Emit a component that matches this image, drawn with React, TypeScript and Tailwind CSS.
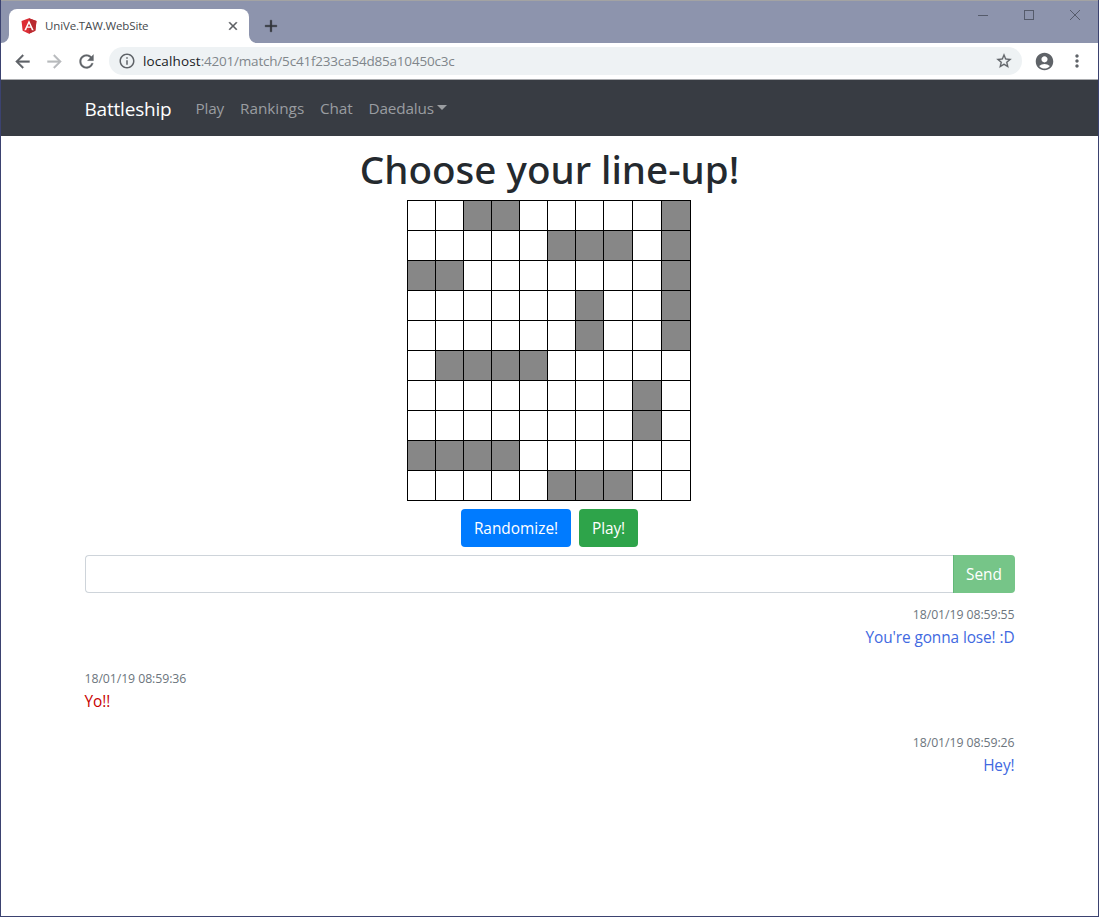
import { MdAccountCircle, MdInfoOutline, MdMoreVert } from "react-icons/md";

const FLEET = [
  "..##.....#",
  ".....###.#",
  "##.......#",
  "......#..#",
  "......#..#",
  ".####.....",
  "........#.",
  "........#.",
  "####......",
  ".....###..",
];

const MESSAGES = [
  { date: "18/01/19 08:59:55", text: "You're gonna lose! :D", own: true },
  { date: "18/01/19 08:59:36", text: "Yo!!", own: false },
  { date: "18/01/19 08:59:26", text: "Hey!", own: true },
];

const GLYPHS = {
  back: "M20 11H7.83l5.59-5.59L12 4l-8 8 8 8 1.41-1.41L7.83 13H20v-2z",
  forward: "m12 4-1.41 1.41L16.17 11H4v2h12.17l-5.58 5.59L12 20l8-8z",
  reload:
    "M17.65 6.35C16.2 4.9 14.21 4 12 4c-4.42 0-7.99 3.58-7.99 8s3.57 8 7.99 8c3.73 0 6.84-2.55 7.73-6h-2.08c-.82 2.33-3.04 4-5.65 4-3.31 0-6-2.69-6-6s2.69-6 6-6c1.66 0 3.14.69 4.22 1.78L13 11h7V4l-2.35 2.35z",
  close:
    "M19 6.41 17.59 5 12 10.59 6.41 5 5 6.41 10.59 12 5 17.59 6.41 19 12 13.41 17.59 19 19 17.59 13.41 12z",
  add: "M19 13h-6v6h-2v-6H5v-2h6V5h2v6h6v2z",
  star: "m22 9.24-7.19-.62L12 2 9.19 8.63 2 9.24l5.46 4.73L5.82 21 12 17.27 18.18 21l-1.63-7.03L22 9.24zM12 15.4l-3.76 2.27 1-4.28-3.32-2.88 4.38-.38L12 6.1l1.71 4.04 4.38.38-3.32 2.88 1 4.28L12 15.4z",
};

function Glyph({
  name,
  size,
  weight = 0.4,
  className = "",
}: {
  name: keyof typeof GLYPHS;
  size: number;
  weight?: number;
  className?: string;
}) {
  return (
    <svg
      width={size}
      height={size}
      viewBox="0 0 24 24"
      fill="currentColor"
      stroke="currentColor"
      strokeWidth={weight}
      className={`shrink-0 ${className}`}
    >
      <path d={GLYPHS[name]} />
    </svg>
  );
}

function AngularLogo() {
  return (
    <svg width="16" height="16" viewBox="0 0 250 250" className="shrink-0">
      <path fill="#dd2c34" d="M125 5 8 46l18 152 99 50 99-50 18-152z" />
      <path fill="#b92a30" d="M125 5v243l99-50 18-152z" />
      <path
        fill="#fff"
        d="M125 36 52 190h28l15-37h60l15 37h28zm0 52 22 43h-44z"
      />
    </svg>
  );
}

function TitleBar() {
  return (
    <div className="flex h-[43px] border-t border-[#a3a3a3] bg-[#8d94ad]">
      <svg width="8" height="8" className="self-end shrink-0">
        <path d="M0 8h8V0a8 8 0 0 1-8 8z" fill="#fff" />
      </svg>
      <div className="mt-2 flex h-[34px] w-60 shrink-0 items-center rounded-t-lg bg-white pl-3 pr-[9px]">
        <AngularLogo />
        <span className="ml-2 flex-1 text-[11.5px] tracking-[-0.14px] text-[#45494d]">
          UniVe.TAW.WebSite
        </span>
        <Glyph name="close" size={14} weight={0.8} className="text-[#5a5d61]" />
      </div>
      <svg width="8" height="8" className="self-end shrink-0">
        <path d="M0 0v8h8a8 8 0 0 1-8-8z" fill="#fff" />
      </svg>
      <Glyph name="add" size={20} className="ml-1 mt-[15px] text-[#303338]" />
      <svg
        width="104"
        height="12"
        className="ml-auto mr-[17px] mt-2"
        fill="none"
        stroke="#555b6b"
        shapeRendering="crispEdges"
      >
        <path d="M1 6.5h10M47.5 1.5h9v9h-9z" />
        <path d="m93 1 10 10m0-10L93 11" shapeRendering="auto" />
      </svg>
    </div>
  );
}

function Toolbar() {
  return (
    <div className="flex h-[37px] items-center border-b border-[#a9abae] bg-white pl-[11px] text-[#5f6368]">
      <Glyph name="back" size={21} />
      <Glyph name="forward" size={21} className="ml-[11px] text-[#b8babd]" />
      <Glyph name="reload" size={21} weight={0.3} className="ml-[11px]" />
      <div className="ml-3 flex h-7 w-[913px] items-center rounded-full bg-[#eef2f4] pl-[9px] pr-[9px]">
        <MdInfoOutline size={18} />
        <span className="ml-[7px] flex-1 text-[13.5px] tracking-[-0.2px] text-[#80868b]">
          <span className="tracking-[0.12px] text-[#202124]">localhost</span>
          :4201/match/5c41f233ca54d85a10450c3c
        </span>
        <Glyph name="star" size={18} weight={0.3} />
      </div>
      <MdAccountCircle size={21} className="ml-[11.5px]" />
      <MdMoreVert size={20} className="ml-3" />
    </div>
  );
}

function Navbar() {
  return (
    <nav className="flex h-14 items-center bg-[#383c43] pl-[83.5px] text-[15.3px] text-[#9a9da1]">
      <a className="w-[111px] pt-0.5 text-[19px] tracking-[-0.2px] text-white">
        Battleship
      </a>
      <a className="w-[44.5px] tracking-[-0.2px]">Play</a>
      <a className="w-[80px]">Rankings</a>
      <a className="w-[48.5px] tracking-[-0.1px]">Chat</a>
      <a className="flex items-center tracking-[-0.15px]">
        Daedalus
        <span className="ml-[3px] mt-[-2px] border-x-[5px] border-t-[5px] border-x-transparent border-t-[#9a9da1]" />
      </a>
    </nav>
  );
}

function Board() {
  return (
    <div className="ml-[322.5px] grid w-[284px] grid-cols-[repeat(7,28px)_repeat(3,29px)] border-l border-t border-black">
      {FLEET.flatMap((row, y) =>
        row.split("").map((cell, x) => (
          <div
            key={`${y}-${x}`}
            className={`h-[30px] border-b border-r border-black ${
              cell === "#" ? "bg-[#878787]" : "bg-white"
            }`}
          />
        )),
      )}
    </div>
  );
}

function Chat() {
  return (
    <section className="mt-2">
      <div className="flex h-[38px]">
        <input className="min-w-0 flex-1 rounded-l border border-r-0 border-[#ced4da] bg-white px-3 outline-none" />
        <button className="w-[62px] rounded-r border-l border-[#62b878] bg-[#76c588] pt-0.5 text-[15.4px] text-white">
          Send
        </button>
      </div>
      <div className="mt-2.5">
        {MESSAGES.map((m) => (
          <div key={m.date} className={`h-16 ${m.own ? "text-right" : "text-left"}`}>
            <div className="h-[23px] text-[12.3px] leading-[23px] tracking-[-0.08px] text-[#6c757d]">
              {m.date}
            </div>
            <div
              className={`text-[15.4px] leading-6 tracking-[-0.1px] ${
                m.own ? "text-[#4169e1]" : "text-[#c80000]"
              }`}
            >
              {m.text}
            </div>
          </div>
        ))}
      </div>
    </section>
  );
}

export default function App() {
  return (
    <div className="flex h-[917px] w-[1099px] flex-col overflow-hidden border-x border-b border-[#3b4270] bg-white font-['Open_Sans','Noto_Sans',sans-serif]">
      <TitleBar />
      <Toolbar />
      <Navbar />
      <main className="mx-auto w-[930px]">
        <h1 className="mt-2 mb-2 h-12 text-center font-['Noto_Sans','Open_Sans',sans-serif] text-[38.6px] font-medium leading-[50px] text-[#24292e]">
          Choose your line-up!
        </h1>
        <Board />
        <div className="mt-2 flex justify-center gap-2 text-[15.4px] text-white">
          <button className="h-[38px] w-[110px] rounded bg-[#007bff] pt-0.5">
            Randomize!
          </button>
          <button className="h-[38px] w-[59px] rounded bg-[#2ea44a] pt-0.5 tracking-[-0.1px]">
            Play!
          </button>
        </div>
        <Chat />
      </main>
    </div>
  );
}
